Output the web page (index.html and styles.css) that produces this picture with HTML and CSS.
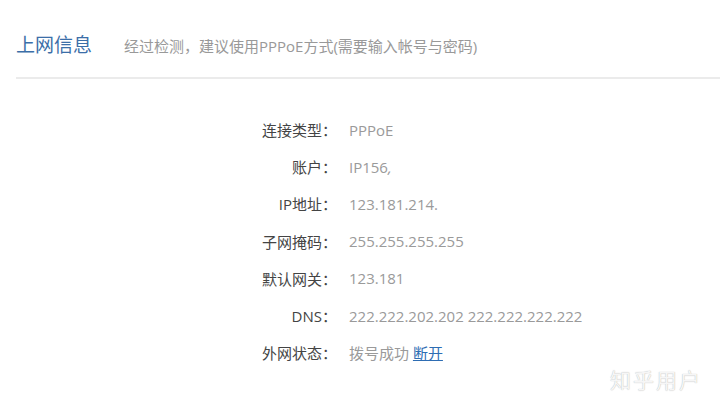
FILE: index.html
```html
<!DOCTYPE html>
<html lang="zh-CN">
<head>
    <meta charset="UTF-8">
    <title>上网信息</title>
    <link rel="stylesheet" href="styles.css">
</head>
<body>

<div class="page">
    <header class="page-header">
        <h2>上网信息</h2>
        <p class="hint">经过检测，建议使用PPPoE方式(需要输入帐号与密码)</p>
    </header>

    <div class="info-list">
        <div class="info-row"><span class="label">连接类型：</span><span class="value">PPPoE</span></div>
        <div class="info-row"><span class="label">账户：</span><span class="value">IP156<span class="cut">,</span></span></div>
        <div class="info-row"><span class="label">IP地址：</span><span class="value">123.181.214.</span></div>
        <div class="info-row"><span class="label">子网掩码：</span><span class="value">255.255.255.255</span></div>
        <div class="info-row"><span class="label">默认网关：</span><span class="value">123.181</span></div>
        <div class="info-row"><span class="label">DNS：</span><span class="value">222.222.202.202 222.222.222.222</span></div>
        <div class="info-row"><span class="label">外网状态：</span><span class="value">拨号成功 <a href="#" class="link">断开</a></span></div>
    </div>
</div>

<div class="watermark">知乎用户</div>

</body>
</html>
```

FILE: styles.css
```css
body {
    margin: 0;
    background: #fff;
    font-family: "Open Sans", "Noto Sans CJK SC", sans-serif;
    color: #444;
}
.page {
    padding-top: 30px;
}
.page-header {
    display: flex;
    align-items: baseline;
    margin-left: 16px;
    padding-bottom: 19px;
    border-bottom: 2px solid #ebebeb;
}
.page-header h2 {
    margin: 0;
    font-size: 19px;
    font-weight: normal;
    color: #3b6ea8;
    width: 108px;
}
.page-header .hint {
    margin: 0;
    font-size: 15px;
    color: #999;
}
.info-list {
    padding-top: 32px;
}
.info-row {
    display: flex;
    height: 37.2px;
    align-items: center;
    font-size: 15px;
}
.label {
    width: 337px;
    text-align: right;
    color: #444;
}
.value {
    margin-left: 12px;
    color: #9a9a9a;
}
.cut {
    font-style: italic;
}
.link {
    color: #2e6db3;
}
.watermark {
    position: absolute;
    right: 18px;
    bottom: 12px;
    font-size: 21px;
    color: #f6f6f6;
    letter-spacing: 2px;
    text-shadow: 0 0 1px #aaa;
}
```
